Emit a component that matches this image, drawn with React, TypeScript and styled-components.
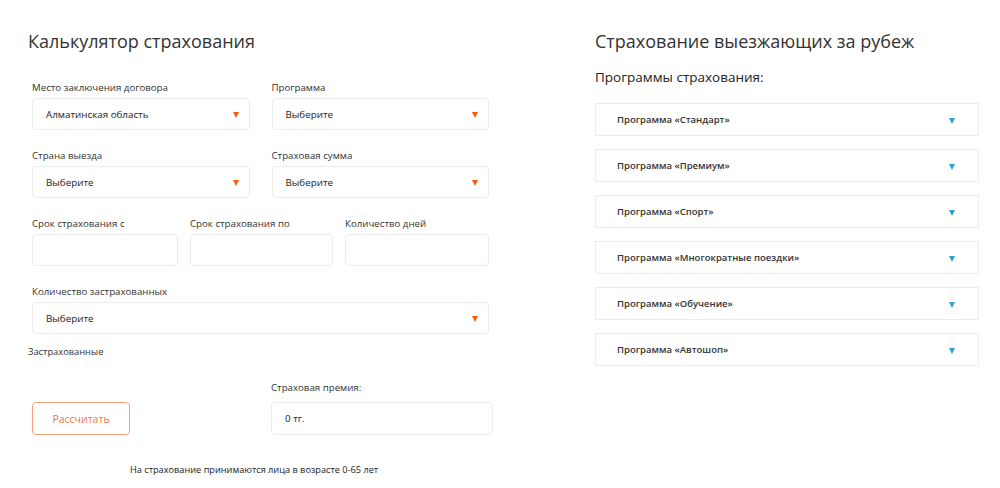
import React from "react";
import styled, { createGlobalStyle } from "styled-components";

const GlobalStyle = createGlobalStyle`
  body {
    margin: 0;
    background: #fff;
    font-family: "Open Sans", "Noto Sans", sans-serif;
    color: #333;
  }
`;

const Page = styled.div`
  display: flex;
  align-items: flex-start;
  padding: 28px 0 0 28px;
`;

const Calculator = styled.section`
  width: 466px;
`;

const Info = styled.section`
  width: 384px;
  margin-left: 101px;
`;

const Title = styled.h1`
  margin: 0;
  font-size: 18px;
  line-height: 26px;
  font-weight: 400;
  color: #333;
`;

const Form = styled.div`
  display: flex;
  flex-direction: column;
  gap: 18px;
  margin-top: 26px;
  padding-left: 4px;
`;

const Row = styled.div<{ $cols: string; $gap: number }>`
  display: grid;
  grid-template-columns: ${(p) => p.$cols};
  column-gap: ${(p) => p.$gap}px;
  width: 457px;
`;

const Field = styled.div`
  display: flex;
  flex-direction: column;
`;

const Label = styled.label`
  font-size: 9.7px;
  line-height: 16px;
  margin-bottom: 2px;
  color: #333;
`;

const Box = styled.div`
  box-sizing: border-box;
  height: 32px;
  border: 1px solid #ececec;
  border-radius: 4px;
  background: #fff;
  display: flex;
  align-items: center;
  justify-content: space-between;
  padding: 0 10px 0 13px;
  font-size: 9.8px;
  color: #222;
`;

const Caret = styled.span<{ $color: string }>`
  width: 0;
  height: 0;
  border-left: 3.5px solid transparent;
  border-right: 3.5px solid transparent;
  border-top: 6px solid ${(p) => p.$color};
  margin-top: 2px;
`;

const Insured = styled.div`
  font-size: 9.3px;
  line-height: 16px;
  margin: -8px 0 0 -4px;
  color: #333;
`;

const ResultRow = styled.div`
  display: flex;
  align-items: flex-end;
  margin-top: 20px;
  padding-left: 4px;
`;

const CalcButton = styled.button`
  box-sizing: border-box;
  width: 98px;
  height: 33px;
  border: 1px solid #f7a27e;
  border-radius: 4px;
  background: #fff;
  color: #f4733f;
  font-family: inherit;
  font-size: 10.5px;
  cursor: pointer;
`;

const Premium = styled.div`
  display: flex;
  flex-direction: column;
  margin-left: 141px;
  width: 222px;
`;

const PremiumLabel = styled(Label)`
  margin-bottom: 6px;
`;

const ResultBox = styled(Box)`
  height: 33px;
`;

const Note = styled.p`
  margin: 28px 0 0 102px;
  font-size: 9.2px;
  line-height: 14px;
  color: #222;
`;

const Subtitle = styled.h2`
  margin: 13px 0 0;
  font-size: 13.5px;
  line-height: 20px;
  font-weight: 400;
  color: #222;
`;

const Accordion = styled.div`
  display: flex;
  flex-direction: column;
  gap: 13px;
  margin-top: 16px;
`;

const Item = styled.div`
  box-sizing: border-box;
  height: 33px;
  border: 1px solid #ececec;
  display: flex;
  align-items: center;
  justify-content: space-between;
  padding: 0 23px 0 21px;
  font-size: 9.5px;
  font-weight: 600;
  color: #333;
`;

const programs = [
  "Программа «Стандарт»",
  "Программа «Премиум»",
  "Программа «Спорт»",
  "Программа «Многократные поездки»",
  "Программа «Обучение»",
  "Программа «Автошоп»",
];

function Select({ label, value }: { label: string; value: string }) {
  return (
    <Field>
      <Label>{label}</Label>
      <Box>
        <span>{value}</span>
        <Caret $color="#ff5a0a" />
      </Box>
    </Field>
  );
}

function Input({ label }: { label: string }) {
  return (
    <Field>
      <Label>{label}</Label>
      <Box />
    </Field>
  );
}

export default function App() {
  return (
    <>
      <GlobalStyle />
      <Page>
        <Calculator>
          <Title>Калькулятор страхования</Title>
          <Form>
            <Row $cols="1fr 1fr" $gap={22}>
              <Select label="Место заключения договора" value="Алматинская область" />
              <Select label="Программа" value="Выберите" />
            </Row>
            <Row $cols="1fr 1fr" $gap={22}>
              <Select label="Страна выезда" value="Выберите" />
              <Select label="Страховая сумма" value="Выберите" />
            </Row>
            <Row $cols="146px 143px 144px" $gap={12}>
              <Input label="Срок страхования с" />
              <Input label="Срок страхования по" />
              <Input label="Количество дней" />
            </Row>
            <Row $cols="1fr" $gap={0}>
              <Select label="Количество застрахованных" value="Выберите" />
            </Row>
            <Insured>Застрахованные</Insured>
          </Form>
          <ResultRow>
            <CalcButton type="button">Рассчитать</CalcButton>
            <Premium>
              <PremiumLabel>Страховая премия:</PremiumLabel>
              <ResultBox>0 тг.</ResultBox>
            </Premium>
          </ResultRow>
          <Note>На страхование принимаются лица в возрасте 0-65 лет</Note>
        </Calculator>
        <Info>
          <Title>Страхование выезжающих за рубеж</Title>
          <Subtitle>Программы страхования:</Subtitle>
          <Accordion>
            {programs.map((name) => (
              <Item key={name}>
                <span>{name}</span>
                <Caret $color="#2f9fd8" />
              </Item>
            ))}
          </Accordion>
        </Info>
      </Page>
    </>
  );
}
